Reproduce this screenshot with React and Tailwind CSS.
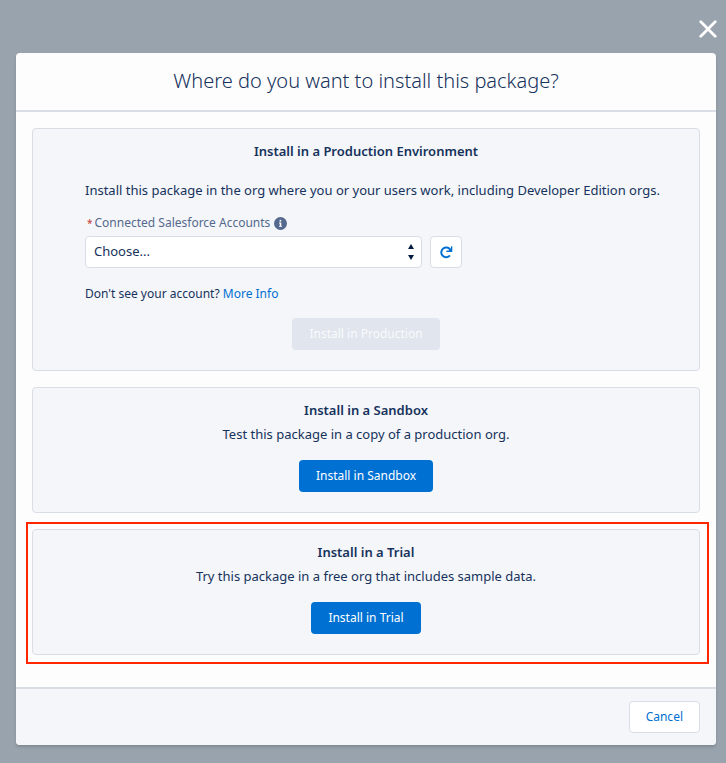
function CloseIcon() {
  return (
    <svg viewBox="0 0 18 18" className="size-[18px]" fill="none" stroke="currentColor" strokeWidth="2.8" strokeLinecap="round" aria-hidden="true">
      <path d="M1.8 1.8 16.2 16.2M16.2 1.8 1.8 16.2" />
    </svg>
  );
}

function InfoIcon() {
  return (
    <svg viewBox="0 0 13 13" className="size-[13px]" aria-hidden="true">
      <circle cx="6.5" cy="6.5" r="6.5" fill="#54698d" />
      <circle cx="6.4" cy="3.8" r="0.95" fill="#fff" />
      <path d="M5 5.5h2.3v3.4H8v.9H5v-.9h.7V6.4H5z" fill="#fff" />
    </svg>
  );
}

function RefreshIcon() {
  return (
    <svg viewBox="0 0 14 14" className="size-[14px]" aria-hidden="true">
      <path d="M11.2 4.6A4.9 4.9 0 1 0 10.4 11.1" fill="none" stroke="currentColor" strokeWidth="2" strokeLinecap="round" />
      <path d="M12.3 1.200h.6q.4 0 .4.4v4.9q0 .5-.5.5H7.800q-.5 0-.5-.4v-.7q0-.4.5-.4h2l2.100-2.100V1.600q0-.4.4-.4z" fill="currentColor" />
    </svg>
  );
}

function SortArrows() {
  return (
    <svg viewBox="0 0 6 16" className="w-[6px] h-4" fill="#061c3f" aria-hidden="true">
      <path d="M3 0 6 5H0zM3 16 0 11H6z" />
    </svg>
  );
}

function InstallCard({ title, children }) {
  return (
    <section className="rounded border border-[#d8dde6] bg-[#f4f6f9] px-[52px] pt-[11px] pb-5 text-center">
      <h2 className="text-[13px] leading-[22px] font-semibold">{title}</h2>
      {children}
    </section>
  );
}

function BrandButton({ children, disabled }) {
  return (
    <button
      type="button"
      disabled={disabled}
      className="h-8 rounded bg-[#0070d2] px-[17px] text-xs text-white disabled:bg-[#e0e5ee] disabled:text-[#fafbfc]"
    >
      {children}
    </button>
  );
}

export default function App() {
  return (
    <div className="min-h-screen bg-[#99a3ad] pl-4 pr-[10px] pb-[18px] font-['Noto_Sans',sans-serif] text-[#16325c]">
      <div className="-mr-px flex h-[53px] items-center justify-end pt-1">
        <button type="button" aria-label="Close" className="text-white">
          <CloseIcon />
        </button>
      </div>

      <div role="dialog" aria-labelledby="dialog-title" className="rounded bg-[#fdfdfd] shadow-[0_2px_3px_rgba(0,0,0,0.16)]">
        {/* Header */}
        <header className="border-b-2 border-[#d8dde6] pt-3 pb-[14px] text-center">
          <h1 id="dialog-title" className="text-xl leading-[31px] font-light">
            Where do you want to install this package?
          </h1>
        </header>

        {/* Install options */}
        <main className="flex flex-col gap-4 px-4 pt-4 pb-8">
          <InstallCard title="Install in a Production Environment">
            <div className="pt-[17px] text-left">
              <p className="-mr-10 text-[13px] leading-[22px]">
                Install this package in the org where you or your users work, including Developer Edition orgs.
              </p>
              <div className="mt-3 flex items-center gap-1 pl-[2px] text-xs leading-5 text-[#54698d]">
                <label htmlFor="account" className="flex gap-[2px]">
                  <span className="text-[10px] text-[#c23934]">*</span>
                  Connected Salesforce Accounts
                </label>
                <button type="button" aria-label="Help">
                  <InfoIcon />
                </button>
              </div>
              <div className="mt-[3px] flex gap-2">
                <div className="relative w-3/5">
                  <select id="account" className="h-8 w-full appearance-none rounded border border-[#d8dde6] bg-white px-2 text-[13px]">
                    <option>Choose...</option>
                  </select>
                  <span className="pointer-events-none absolute inset-y-0 right-2 flex items-center">
                    <SortArrows />
                  </span>
                </div>
                <button
                  type="button"
                  aria-label="Refresh"
                  className="flex size-8 items-center justify-center rounded border border-[#d8dde6] bg-white text-[#0070d2]"
                >
                  <RefreshIcon />
                </button>
              </div>
              <p className="mt-4 text-xs leading-5">
                Don't see your account?{" "}
                <a href="#" className="text-[#0070d2]">More Info</a>
              </p>
            </div>
            <div className="mt-[14px]">
              <BrandButton disabled>Install in Production</BrandButton>
            </div>
          </InstallCard>

          <InstallCard title="Install in a Sandbox">
            <p className="mt-[2px] mb-[15px] text-[13px] leading-[22px]">Test this package in a copy of a production org.</p>
            <BrandButton>Install in Sandbox</BrandButton>
          </InstallCard>

          <div className="relative">
            <InstallCard title="Install in a Trial">
              <p className="mt-[2px] mb-[15px] text-[13px] leading-[22px]">Try this package in a free org that includes sample data.</p>
              <BrandButton>Install in Trial</BrandButton>
            </InstallCard>
            {/* Highlight frame */}
            <div className="pointer-events-none absolute -top-[7px] -right-[9px] -bottom-[9px] -left-[6px] border-2 border-[#ff2600]" />
          </div>
        </main>

        {/* Footer */}
        <footer className="flex justify-end rounded-b border-t-2 border-[#d8dde6] bg-[#f4f6f9] px-4 py-3">
          <button type="button" className="h-8 rounded border border-[#d8dde6] bg-white px-4 text-xs text-[#0070d2]">
            Cancel
          </button>
        </footer>
      </div>
    </div>
  );
}
